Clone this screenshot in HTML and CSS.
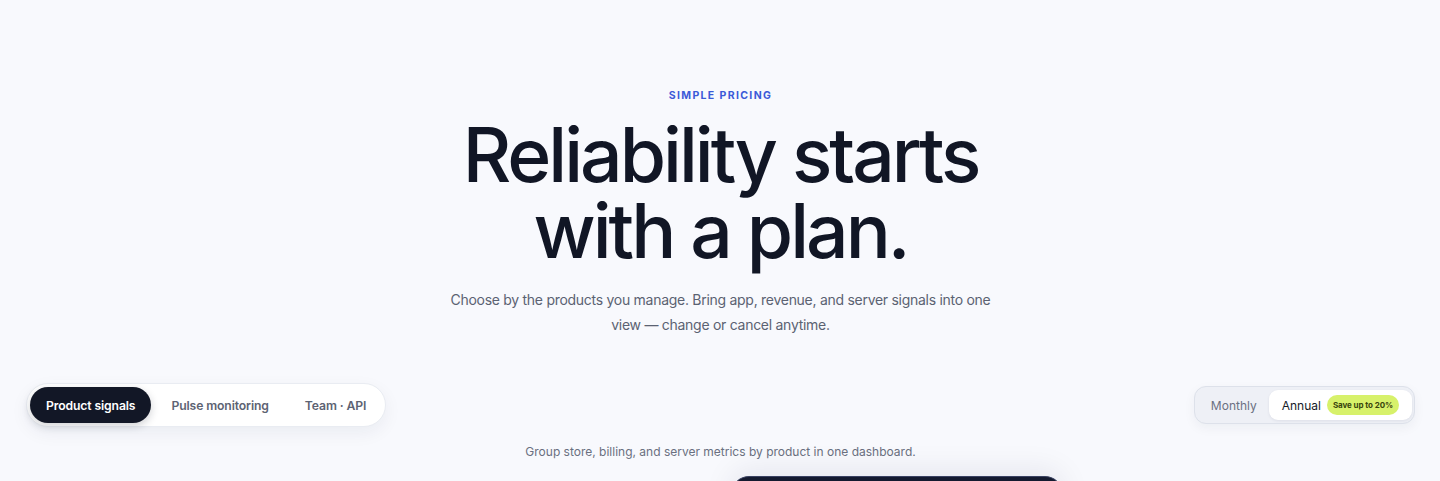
FILE: index.html
```html
<!DOCTYPE html>
<html lang="en">
<head>
<meta charset="utf-8">
<title>Pricing</title>
<link rel="stylesheet" href="styles.css">
</head>
<body>
<main class="page">
  <section class="hero">
    <p class="eyebrow">SIMPLE PRICING</p>
    <h1 class="title"><span class="title-line">Reliability starts</span><span class="title-line">with a plan.</span></h1>
    <p class="lead">Choose by the products you manage. Bring app, revenue, and server signals into one view — change or cancel anytime.</p>
  </section>

  <div class="controls">
    <div class="tabs">
      <button class="tab tab-active">Product signals</button>
      <button class="tab">Pulse monitoring</button>
      <button class="tab">Team · API</button>
    </div>
    <div class="billing">
      <button class="bill">Monthly</button>
      <button class="bill bill-active">Annual <span class="badge">Save up to 20%</span></button>
    </div>
  </div>

  <p class="caption">Group store, billing, and server metrics by product in one dashboard.</p>

  <div class="cards">
    <div class="card-slot"></div>
    <div class="card card-dark"></div>
    <div class="card-slot"></div>
  </div>
</main>
</body>
</html>
```
FILE: styles.css
```css
* { box-sizing: border-box; }
html, body { margin: 0; padding: 0; }
body {
  background: #f8f9fd;
  font-family: "Inter", "Noto Sans", sans-serif;
  color: #111625;
  overflow: hidden;
  height: 481px;
}
.page {
  padding: 88px 25px 0 26px;
}
.hero {
  display: flex;
  flex-direction: column;
  align-items: center;
  text-align: center;
}
.eyebrow {
  margin: 0;
  font-size: 10.5px;
  line-height: 16px;
  font-weight: 700;
  letter-spacing: 0.13em;
  color: #3b5ad8;
}
.title {
  margin: 13px 0 0;
  font-size: 75px;
  font-weight: 500;
  letter-spacing: -0.04em;
  color: #111625;
  display: flex;
  flex-direction: column;
  align-items: center;
}
.title-line {
  display: block;
  line-height: 76px;
}
.lead {
  margin: 18px 0 0;
  max-width: 560px;
  font-size: 14px;
  line-height: 25px;
  color: #5b6272;
  letter-spacing: -0.02em;
}
.controls {
  margin-top: 46px;
  display: flex;
  justify-content: space-between;
  align-items: center;
}
.tabs {
  display: flex;
  gap: 4px;
  padding: 3px;
  background: #ffffff;
  border: 1px solid #e9ecf2;
  border-radius: 22px;
  box-shadow: 0 6px 18px rgba(20, 30, 60, 0.06);
}
button {
  font-family: inherit;
  border: 0;
  background: none;
  cursor: pointer;
}
.tab {
  height: 36px;
  padding: 0 16px;
  border-radius: 18px;
  font-size: 12.2px;
  font-weight: 600;
  color: #5d6373;
  letter-spacing: -0.01em;
}
.tab-active {
  background: #121726;
  color: #ffffff;
  box-shadow: 0 3px 8px rgba(18, 23, 38, 0.2);
}
.billing {
  display: flex;
  align-items: center;
  gap: 12px;
  height: 38px;
  padding: 3px 2px 3px 16px;
  background: #eef0f6;
  border: 1px solid #dde1ea;
  border-radius: 12px;
  box-shadow: 0 4px 12px rgba(20, 30, 60, 0.05);
}
.bill {
  padding: 0;
  font-size: 12px;
  color: #6b7182;
}
.bill-active {
  display: flex;
  align-items: center;
  gap: 6px;
  height: 30px;
  padding: 0 13px;
  background: #ffffff;
  border-radius: 9px;
  color: #151a28;
  box-shadow: 0 1px 3px rgba(20, 30, 60, 0.08);
}
.badge {
  display: inline-flex;
  align-items: center;
  height: 20px;
  padding: 0 6px;
  border-radius: 10px;
  background: #d7f16a;
  color: #38440c;
  font-size: 8px;
  font-weight: 700;
  letter-spacing: -0.01em;
}
.caption {
  margin: 15px 0 0;
  text-align: center;
  font-size: 12px;
  line-height: 20px;
  color: #6a7080;
}
.cards {
  margin-top: 14px;
  display: grid;
  grid-template-columns: 332px 332px 332px;
  gap: 40px;
  justify-content: center;
  padding-left: 352px;
}
.card {
  height: 60px;
  border-radius: 18px 18px 0 0;
}
.card-dark {
  background: #141a30;
  border: 1px solid #3a4262;
  box-shadow: 0 -6px 30px rgba(20, 30, 70, 0.08);
}
```
